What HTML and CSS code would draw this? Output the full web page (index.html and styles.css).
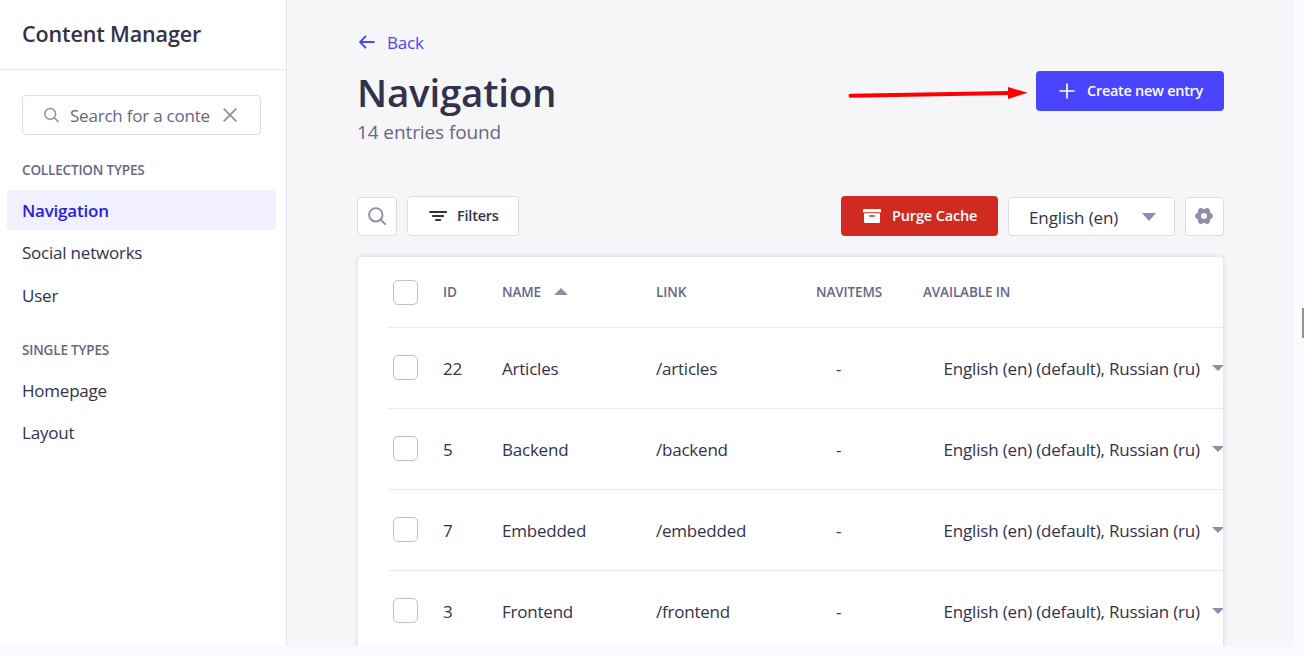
FILE: index.html
```html
<!DOCTYPE html>
<html lang="en">
<head>
<meta charset="utf-8">
<title>Content Manager</title>
<link rel="stylesheet" href="styles.css">
</head>
<body>
<div class="app">
  <aside class="sidebar">
    <div class="sidebar-head"><span class="brand">Content Manager</span></div>
    <div class="search-box">
      <svg class="icon-search" width="16" height="16" viewBox="0 0 16 16"><circle cx="7.2" cy="6.9" r="5.4"/><path d="M11.2 10.8L15 14.4"/></svg>
      <span class="search-text">Search for a conte</span>
      <svg class="icon-clear" width="14" height="14" viewBox="0 0 14 14"><path d="M.7.7L13.3 13.3M13.3.7L.7 13.3"/></svg>
    </div>
    <h2 class="group-label">COLLECTION TYPES</h2>
    <nav class="links">
      <a class="link link-active"><span>Navigation</span></a>
      <a class="link"><span>Social networks</span></a>
      <a class="link"><span>User</span></a>
    </nav>
    <h2 class="group-label group-single">SINGLE TYPES</h2>
    <nav class="links">
      <a class="link"><span>Homepage</span></a>
      <a class="link"><span>Layout</span></a>
    </nav>
  </aside>
  <main class="main">
    <a class="back"><svg class="icon-back" width="16" height="14" viewBox="0 0 16 14"><path d="M15.6 7H1.2M7 .9L1 7l6 6.1"/></svg><span>Back</span></a>
    <div class="title-row">
      <div>
        <h1 class="title">Navigation</h1>
        <p class="subtitle">14 entries found</p>
      </div>
      <div class="create-wrap">
        <svg class="pointer" width="180" height="14" viewBox="0 0 180 14"><path class="pointer-line" d="M2.5 8.7L162 6"/><path class="pointer-head" d="M160 0L179.500 5.700L160 12z"/></svg>
        <button class="btn btn-primary"><svg width="16" height="16" viewBox="0 0 16 16"><path class="plus" d="M8 .5v15M.5 8h15"/></svg><span>Create new entry</span></button>
      </div>
    </div>
    <div class="toolbar">
      <button class="btn-icon"><svg class="icon-search big" width="18" height="18" viewBox="0 0 18 18"><circle cx="7.800" cy="7.800" r="6.700"/><path d="M12.600 12.600L17 17"/></svg></button>
      <button class="btn btn-filter"><svg width="18" height="10" viewBox="0 0 18 10"><path class="bars" d="M.9 1h16.400M3.900 5h10.400M6.900 9h4.400"/></svg><span>Filters</span></button>
      <span class="spacer"></span>
      <button class="btn btn-danger"><svg width="18" height="14" viewBox="0 0 18 14"><path class="solid" fill-rule="evenodd" d="M.8 0h16.400q.8 0 .8.800v2.400H0V.8Q0 0 .8 0zM1 4.200h16v8.600q0 1.200-1.200 1.200H2.200Q1 14 1 12.800zM6.200 6.300v1.500h5.600V6.300z"/></svg><span>Purge Cache</span></button>
      <button class="select"><span>English (en)</span><svg width="14" height="8" viewBox="0 0 14 8"><path class="caret" d="M0 0h14L7 8z"/></svg></button>
      <button class="btn-icon gear"><svg width="18" height="18" viewBox="0 0 18 18"><path class="caret" fill-rule="evenodd" d="M5.200 1.100Q6.300.5 7 1.500Q9 2.400 11 1.500Q11.700.5 12.800 1.100L14.700 2.200Q15.300 2.900 14.700 4.200Q15 6 16.800 6.700Q17.700 6.900 17.700 7.800V10.200Q17.700 11.100 16.800 11.300Q15 12 14.700 13.800Q15.300 15.100 14.700 15.800L12.800 16.900Q11.700 17.500 11 16.500Q9 15.600 7 16.500Q6.300 17.500 5.200 16.900L3.300 15.800Q2.700 15.100 3.300 13.800Q3 12 1.200 11.300Q.3 11.100.3 10.200V7.800Q.3 6.900 1.200 6.700Q3 6 3.300 4.200Q2.700 2.900 3.300 2.200zM9 6a3 3 0 1 0 0 6a3 3 0 1 0 0-6z"/></svg></button>
    </div>
    <section class="card">
      <div class="row row-head">
        <span class="check"></span><span>ID</span>
        <span class="sorted">NAME<svg width="14" height="7" viewBox="0 0 14 7"><path class="caret" d="M0 7h14L7 0z"/></svg></span>
        <span>LINK</span><span>NAVITEMS</span><span>AVAILABLE IN</span>
      </div>
      <div class="row"><span class="check"></span><span>22</span><span>Articles</span><span>/articles</span><span class="dash">-</span><span class="locales"><span>English (en) (default), Russian (ru)</span><svg width="12" height="6" viewBox="0 0 12 6"><path class="caret" d="M0 0h12L6 6z"/></svg></span></div>
      <div class="row"><span class="check"></span><span>5</span><span>Backend</span><span>/backend</span><span class="dash">-</span><span class="locales"><span>English (en) (default), Russian (ru)</span><svg width="12" height="6" viewBox="0 0 12 6"><path class="caret" d="M0 0h12L6 6z"/></svg></span></div>
      <div class="row"><span class="check"></span><span>7</span><span>Embedded</span><span>/embedded</span><span class="dash">-</span><span class="locales"><span>English (en) (default), Russian (ru)</span><svg width="12" height="6" viewBox="0 0 12 6"><path class="caret" d="M0 0h12L6 6z"/></svg></span></div>
      <div class="row"><span class="check"></span><span>3</span><span>Frontend</span><span>/frontend</span><span class="dash">-</span><span class="locales"><span>English (en) (default), Russian (ru)</span><svg width="12" height="6" viewBox="0 0 12 6"><path class="caret" d="M0 0h12L6 6z"/></svg></span></div>
    </section>
  </main>
  <div class="scroll-mark"></div>
</div>
</body>
</html>
```
FILE: styles.css
```css
* { box-sizing: border-box; }
body {
  margin: 0;
  background: #f9faff;
  color: #32324d;
  font-family: "Open Sans", "Noto Sans", sans-serif;
  font-size: 17px;
  letter-spacing: -0.22px;
}
button { font: inherit; letter-spacing: inherit; color: inherit; padding: 0; }
svg { display: block; flex: none; fill: none; }
h1, h2, p { margin: 0; }

.app { display: flex; width: 1304px; height: 646px; overflow: hidden; position: relative; }

.sidebar { width: 287px; flex: none; background: #fff; border-right: 1px solid #e4e4ef; }
.sidebar-head { height: 70px; border-bottom: 1px solid #eaeaef; padding-left: 22px; line-height: 68px; }
.brand { font-size: 21.500px; font-weight: 600; letter-spacing: -0.13px; }
.search-box {
  display: flex; align-items: center;
  width: 239px; height: 40px; margin: 25px 0 0 22px; padding-left: 20px;
  border: 1px solid #dcdce4; border-radius: 4px;
}
.icon-search { stroke: #8e8ea9; stroke-width: 1.500; stroke-linecap: round; }
.icon-search.big { stroke-width: 1.900; margin-bottom: 1px; }
.search-text { color: #666687; width: 141px; margin: 0 12px 0 11px; white-space: nowrap; }
.icon-clear { stroke: #8e8ea9; stroke-width: 1.700; }
.group-label {
  margin: 25px 0 10px 22px; line-height: 20px;
  font-size: 13.500px; font-weight: 600; color: #666687; letter-spacing: -0.17px;
}
.group-single { margin-top: 25px; }
.links { display: grid; grid-auto-rows: 40px; row-gap: 2.400px; margin: 0 10px 0 7px; }
.link { padding-left: 15px; line-height: 41px; border-radius: 4px; }
.link-active { background: #f0f0ff; color: #271fe0; font-weight: 600; }

.main { width: 1007px; flex: none; background: #f6f6f9; padding: 30px 70px 0 71px; }
.back { display: flex; align-items: center; gap: 12px; height: 25px; padding-left: 1px; color: #4945ff; }
.icon-back { stroke: #4945ff; stroke-width: 1.800; margin-bottom: 1px; }
.title-row { display: flex; justify-content: space-between; padding-top: 14px; height: 141px; }
.title { font-size: 38.500px; line-height: 50px; font-weight: 600; letter-spacing: -0.2px; margin: -2px 0 2px -1px; }
.subtitle { font-size: 19px; line-height: 26px; color: #666687; letter-spacing: -0.1px; margin-left: -1px; }
.create-wrap { display: flex; align-items: flex-start; gap: 8px; padding-top: 2px; }
.pointer { margin-top: 16px; }
.pointer-line { stroke: #f00; stroke-width: 4; stroke-linecap: round; }
.pointer-head { fill: #f00; }
.btn {
  display: flex; align-items: center; height: 40px; border: 1px solid transparent;
  border-radius: 4px; font-size: 14.500px; font-weight: 600; white-space: nowrap;
}
.btn > span { padding-bottom: 2px; }
.btn-primary { width: 188px; padding-left: 22px; gap: 12px; background: #4945ff; color: #fff; letter-spacing: -0.28px; }
.plus { stroke: #fff; stroke-width: 1.700; }
.toolbar { display: flex; align-items: center; gap: 10px; height: 40px; margin-left: -1px; }
.btn-icon {
  display: flex; align-items: center; justify-content: center;
  width: 40px; height: 39px; margin-top: 1px;
  background: #fff; border: 1px solid #dcdce4; border-radius: 4px;
}
.gear { width: 39px; }
.gear svg { margin: 0 1px 1px 0; }
.btn-filter { width: 112px; padding-left: 21px; gap: 10px; background: #fff; border-color: #dcdce4; }
.bars { stroke: #32324d; stroke-width: 1.800; stroke-linecap: round; }
.spacer { flex: 1; }
.btn-danger { width: 157px; padding-left: 21px; gap: 11px; background: #d02b20; color: #fff; letter-spacing: -0.15px; }
.solid { fill: #fff; }
.select {
  display: flex; align-items: center; justify-content: space-between;
  width: 167px; height: 39px; margin-top: 1px; padding: 0 18px 0 20px;
  background: #fff; border: 1px solid #dcdce4; border-radius: 4px;
}
.select > span { padding-top: 1px; letter-spacing: -0.12px; }
.caret { fill: #8e8ea9; }

.card {
  width: 865px; margin-top: 21px; padding-left: 30px; overflow: hidden;
  background: #fff; border-radius: 4px 4px 0 0; box-shadow: 0 0 5px rgba(33, 33, 52, 0.16);
}
.row {
  display: grid; grid-template-columns: 55px 59px 154px 160px 107px 1fr; align-items: center;
  height: 81px; border-bottom: 1px solid #eaeaef; white-space: nowrap;
}
.row-head { height: 71px; font-size: 13.500px; font-weight: 600; color: #666687; letter-spacing: -0.12px; }
.check { width: 25px; height: 25px; margin-left: 5px; border: 1px solid #c0c0cf; border-radius: 5px; }
.row:not(.row-head) .check { margin-bottom: 1px; }
.sorted { display: flex; align-items: center; gap: 13px; }
.sorted svg { margin-bottom: 2px; }
.dash { padding-left: 20px; }
.locales { display: flex; align-items: center; padding-left: 20.500px; }
.locales > span { width: 268.500px; flex: none; letter-spacing: -0.18px; }

.scroll-mark { position: absolute; right: 0; top: 308px; width: 2px; height: 30px; background: #929292; }
```
